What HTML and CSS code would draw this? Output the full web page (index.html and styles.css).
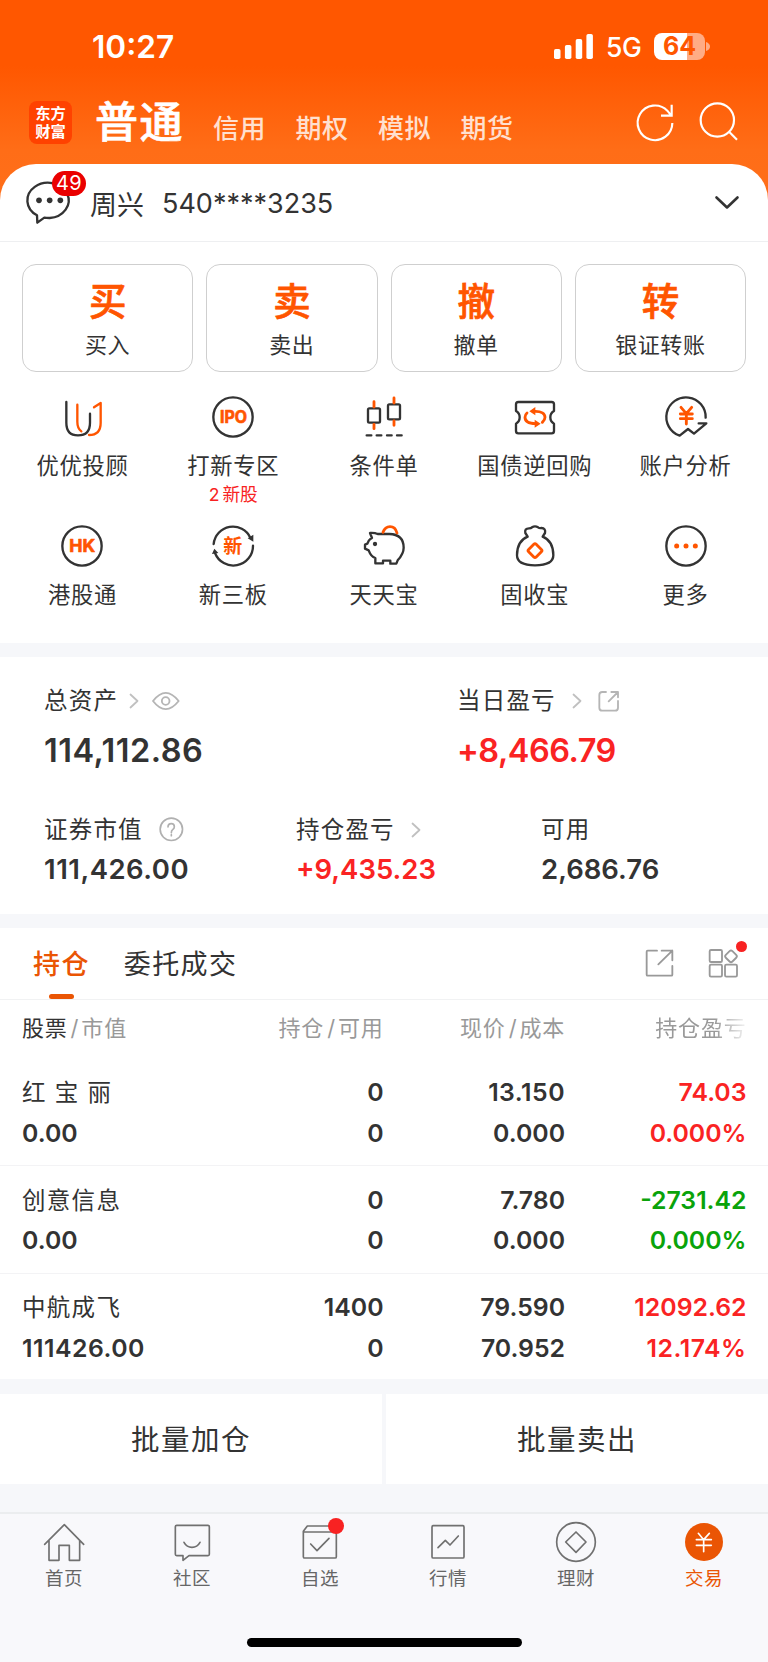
FILE: index.html
```html
<!DOCTYPE html>
<html lang="zh-CN">
<head>
<meta charset="utf-8">
<title>交易</title>
<link rel="stylesheet" href="styles.css">
</head>
<body>
<header class="top">
  <div class="status">
    <span class="time">10:27</span>
    <div class="status-right">
      <svg class="signal" viewBox="0 0 39 25"><rect x="0" y="15" width="6.5" height="10" rx="1.8"/><rect x="10.9" y="11" width="6.5" height="14" rx="1.8"/><rect x="21.7" y="5" width="6.5" height="20" rx="1.8"/><rect x="32.4" y="0" width="6.5" height="25" rx="1.8"/></svg>
      <span class="net">5G</span>
      <div class="battery"><span class="battery-text">64</span></div>
      <svg class="battery-cap" viewBox="0 0 4 9"><path d="M0 0Q4 1.5 4 4.5T0 9z"/></svg>
    </div>
  </div>
  <nav class="modes">
    <div class="logo"><span>东方</span><span>财富</span></div>
    <span class="mode-on">普通</span>
    <span class="mode">信用</span><span class="mode">期权</span><span class="mode">模拟</span><span class="mode">期货</span>
    <svg class="top-icon refresh" viewBox="753 303 126 126"><path d="M865 369A52 52 0 1 1 850 332L862 347M863 314V347H831"/></svg>
    <svg class="top-icon" viewBox="940 303 126 126"><circle cx="998" cy="360" r="50"/><path d="M1034 396L1057 419"/></svg>
  </nav>
</header>

<main class="sheet">
  <section class="account">
    <div class="chat">
      <svg viewBox="78 540 135 135"><path d="M108 646A62 53 0 1 1 146 654Q135 654 130 653L109 668Z"/><g class="fill-dark"><circle cx="114" cy="601" r="8.5"/><circle cx="146" cy="601" r="8.5"/><circle cx="178" cy="601" r="8.5"/></g></svg>
      <span class="badge">49</span>
    </div>
    <span class="name">周兴</span>
    <span class="acct">540****3235</span>
    <svg class="down" viewBox="0 0 24 14"><path d="M1.5 1.5L12 11.5L22.5 1.5"/></svg>
  </section>

  <section class="cards">
    <div class="card"><b>买</b><span>买入</span></div>
    <div class="card"><b>卖</b><span>卖出</span></div>
    <div class="card"><b>撤</b><span>撤单</span></div>
    <div class="card"><b>转</b><span>银证转账</span></div>
  </section>

  <section class="tools">
    <div class="tool"><svg viewBox="181 432 132 132"><path d="M200 453V515Q200 553 235 553Q271 553 271 515V488"/><path class="o" d="M233 461V512Q233 532 245 541M283 469L303 456V515Q303 552 268 552"/></svg><span>优优投顾</span></div>
    <div class="tool"><svg viewBox="634 432 132 132"><circle cx="700" cy="498" r="59"/><text x="661" y="517" font-size="50" textLength="81" lengthAdjust="spacingAndGlyphs">IPO</text></svg><span>打新专区</span><em>2 新股</em></div>
    <div class="tool"><svg viewBox="1086 432 132 132"><rect x="1104" y="472" width="36" height="43" rx="4"/><rect x="1164" y="460" width="36" height="45" rx="4"/><path d="M1100 553h14M1130 553h14M1161 553h14M1191 553h14"/><path class="o wick" d="M1122 452V468M1122 520V533M1182 441V456M1182 510V523"/></svg><span>条件单</span></div>
    <div class="tool"><svg viewBox="386 432 132 132"><path d="M402 453H502Q509 453 509 460V480Q498 486 498 499Q498 512 509 518V540Q509 547 502 547H402Q395 547 395 540V518Q406 512 406 499Q406 486 395 480V460Q395 453 402 453Z"/><path class="o arr" d="M450 481C472 480 482 488 482 499Q482 507 474 514M454 518C432 518 422 510 422 499Q422 491 428 486"/><path class="of" d="M435 481L453 468V493ZM469 518L451 506V530Z"/></svg><span>国债逆回购</span></div>
    <div class="tool"><svg viewBox="838 432 132 132"><path d="M963 500A59 59 0 1 0 885 554L910 534L928 548L965 517H942"/><path class="o arr" d="M889 469L905 488L921 469M905 488V519M887 489H923M887 503H923"/></svg><span>账户分析</span></div>
    <div class="tool"><svg viewBox="182 71 132 132"><circle cx="248" cy="137" r="59"/><text x="210" y="156" font-size="53" textLength="78" lengthAdjust="spacingAndGlyphs">HK</text></svg><span>港股通</span></div>
    <div class="tool"><svg viewBox="634 71 132 132"><path d="M642 131A58 58 0 0 1 752 112M760 136A59 59 0 0 1 646 158"/><path class="df" d="M744 114L761 103V124ZM644 145L637 161L656 158Z"/><text class="cjk" x="671" y="158" font-size="57">新</text></svg><span>新三板</span></div>
    <div class="tool"><svg viewBox="1086 71 132 132"><path d="M1107 120Q1110 116 1116 113L1110 98Q1124 97 1133 101H1168C1200 102 1211 120 1211 142Q1211 160 1193 180L1189 190H1171V181H1149V189H1126V173Q1113 169 1106 150L1095 145V133L1102 130Z"/><circle class="df" cx="1125" cy="131" r="6.5"/><path class="o arr" d="M1149 96Q1155 79 1170 79Q1186 79 1191 98"/></svg><span>天天宝</span></div>
    <div class="tool"><svg viewBox="386 71 132 132"><path d="M430 109Q398 122 398 165Q398 195 452 195Q507 195 507 165Q507 122 475 109M430 109L423 98Q420 84 434 84Q440 84 443 81Q452 75 461 81Q465 84 471 83Q485 84 482 98L475 109"/><rect class="o arr" x="436" y="135" width="32" height="32" rx="5" transform="rotate(45 452 151)"/></svg><span>固收宝</span></div>
    <div class="tool"><svg viewBox="838 71 132 132"><circle cx="904" cy="137" r="59"/><g class="of"><circle cx="876" cy="137" r="7.5"/><circle cx="904" cy="137" r="7.5"/><circle cx="932" cy="137" r="7.5"/></g></svg><span>更多</span></div>
  </section>

  <section class="assets">
    <div class="asset-row main-row">
      <div class="asset">
        <div class="label">总资产<svg class="chev" viewBox="0 0 10 16"><path d="M1.5 1.5L8.5 8L1.5 14.5"/></svg><svg class="eye" viewBox="454 60 84 60"><path d="M457 90Q495 41 534 90Q495 139 457 90Z"/><circle cx="495" cy="90" r="11.5"/></svg></div>
        <div class="value ones">114,112.86</div>
      </div>
      <div class="asset">
        <div class="label">当日盈亏<svg class="chev far" viewBox="0 0 10 16"><path d="M1.5 1.5L8.5 8L1.5 14.5"/></svg><svg class="share" viewBox="640 60 66 66"><path d="M664 66H653Q644 66 644 75V113Q644 122 653 122H691Q700 122 700 113V93M680 66H700V82M700 66L672 94"/></svg></div>
        <div class="value tight up">+8,466.79</div>
      </div>
    </div>
    <div class="asset-row sub-row">
      <div class="asset">
        <div class="label">证券市值<svg class="help" viewBox="475 440 74 74"><circle cx="512" cy="477" r="33.5"/><path d="M502 470Q502 460 512 460Q521 460 521 469Q521 474 516 478Q512 481 512 487M512 493V496"/></svg></div>
        <div class="value ones">111,426.00</div>
      </div>
      <div class="asset">
        <div class="label">持仓盈亏<svg class="chev far" viewBox="0 0 10 16"><path d="M1.5 1.5L8.5 8L1.5 14.5"/></svg></div>
        <div class="value up">+9,435.23</div>
      </div>
      <div class="asset">
        <div class="label">可用</div>
        <div class="value">2,686.76</div>
      </div>
    </div>
  </section>

  <section class="holdings">
    <div class="tabs">
      <span class="tab tab-on">持仓</span>
      <span class="tab">委托成交</span>
      <svg class="tab-icon" viewBox="780 86 90 90"><path d="M816 94H788Q785 94 785 97V166Q785 169 788 169H859Q862 169 862 166V140M830 94H862V123M862 94L820 135"/></svg>
      <div class="grid-wrap"><svg class="tab-icon" viewBox="971 87 90 90"><rect x="976" y="93" width="37" height="36" rx="4"/><rect x="976" y="137" width="37" height="36" rx="4"/><rect x="1022" y="137" width="36" height="36" rx="4"/><rect x="1026" y="98" width="28" height="28" rx="6" transform="rotate(45 1040 112)"/></svg><i class="dot"></i></div>
    </div>
    <div class="row head">
      <span><strong>股票</strong><i>/</i>市值</span><span>持仓<i>/</i>可用</span><span>现价<i>/</i>成本</span><span class="fade">持仓盈亏</span>
    </div>
    <div class="row stock">
      <span class="stock-name">红 宝 丽</span><span>0</span><span class="w1">13.150</span><span class="up">74.03</span>
      <span>0.00</span><span>0</span><span>0.000</span><span class="up">0.000%</span>
    </div>
    <div class="row stock">
      <span class="stock-name">创意信息</span><span>0</span><span>7.780</span><span class="down-c">-2731.42</span>
      <span>0.00</span><span>0</span><span>0.000</span><span class="down-c">0.000%</span>
    </div>
    <div class="row stock">
      <span class="stock-name">中航成飞</span><span>1400</span><span>79.590</span><span class="up">12092.62</span>
      <span class="w1">111426.00</span><span>0</span><span>70.952</span><span class="up w1">12.174%</span>
    </div>
  </section>

  <section class="batch"><div>批量加仓</div><div>批量卖出</div></section>
</main>

<footer class="bottom">
  <nav class="nav">
    <div class="nav-item"><svg viewBox="129 451 126 126"><path d="M134 521L193 462L251 521M147 510V569H177V524H208V569H239V510"/></svg>首页</div>
    <div class="nav-item"><svg viewBox="513 451 126 126"><path d="M526 468Q526 464 530 464H624Q628 464 628 468V551Q628 555 624 555H567L549 569V555H530Q526 555 526 551ZM552 515Q560 530 576 530Q592 530 600 515"/></svg>社区</div>
    <div class="nav-item"><svg viewBox="897 451 126 126"><path d="M910 484H1009V558Q1009 562 1005 562H914Q910 562 910 558V482L922 466H1009V484M932 520L951 540L987 503"/></svg>自选<i class="dot big"></i></div>
    <div class="nav-item"><svg viewBox="129 451 126 126"><rect x="144" y="465" width="96" height="97" rx="4"/><path d="M162 531L184 509L198 523L223 496"/></svg>行情</div>
    <div class="nav-item"><svg viewBox="513 451 126 126"><circle cx="576" cy="514" r="58"/><path d="M576 484L606 514L576 545L545 514Z"/></svg>理财</div>
    <div class="nav-item nav-on"><svg viewBox="896 451 126 126"><circle class="disc" cx="959" cy="514" r="57"/><path class="yen" d="M942 488L958 507L975 488M958 507V543M936 507H981M936 524H981"/></svg>交易</div>
  </nav>
  <div class="home-bar"></div>
</footer>
</body>
</html>
```

FILE: styles.css
```css
* { box-sizing: border-box; }
body {
  margin: 0; width: 768px; height: 1662px; overflow: hidden;
  font-family: Inter, "Noto Sans CJK SC", sans-serif;
  color: #333; background: #f6f7fa;
  display: flex; flex-direction: column;
}
svg { display: block; flex: none; fill: none; stroke: #333; stroke-linecap: round; stroke-linejoin: round; overflow: visible; }

/* Header */
.top { height: 204px; flex: none; color: #fff; background: linear-gradient(#ff5700 0, #ff5700 66px, #ff6d17 150px, #ff6f1a 204px); }
.status { height: 93px; display: flex; justify-content: space-between; align-items: center; padding: 0 58px 0 92px; }
.time { font-size: 31.6px; font-weight: 600; }
.status-right { display: flex; align-items: center; }
.signal { width: 39px; height: 25px; fill: #fff; stroke: none; margin-right: 13px; }
.net { font-size: 26.5px; font-weight: 450; width: 36px; margin-right: 12px; letter-spacing: -.5px; }
.battery { width: 51px; height: 27px; border-radius: 8px; background: linear-gradient(90deg, #fff 33px, #ffac85 33px); display: flex; align-items: center; justify-content: center; margin-right: 1px; }
.battery-text { font-size: 25px; line-height: 27px; font-weight: 700; color: #ff5700; }
.battery-cap { width: 4px; height: 9px; fill: #ffac85; stroke: none; }
.modes { display: flex; align-items: center; height: 57px; padding-left: 29px; }
.modes > * { flex: none; }
.logo { width: 43px; height: 43px; margin-top: 2px; border-radius: 8px; background: #ff4200; font-weight: 700; font-size: 15.3px; display: grid; grid-auto-rows: 18px; line-height: 18px; justify-items: center; align-content: center; }
.mode-on { font-size: 43px; font-weight: 500; -webkit-text-stroke: .7px #fff; letter-spacing: 1.4px; line-height: 60px; margin: 0 29px 0 23px; width: 89px; }
.mode { font-size: 26px; line-height: 40px; font-weight: 500; width: 82.5px; color: #ffe0d0; padding-top: 14px; letter-spacing: .6px; }
.top-icon { width: 42px; height: 42px; stroke: #fff; stroke-width: 6.5; stroke-linecap: butt; stroke-linejoin: miter; margin-left: 21px; }
.refresh { margin-left: 92px; }

/* Account */
.sheet { margin-top: -40.5px; border-radius: 36px 36px 0 0; background: #fff; flex: none; }
.account { height: 78.5px; display: flex; align-items: center; padding: 2px 29px 0 26px; border-bottom: 1.5px solid #eeeff1; }
.chat { position: relative; width: 64px; }
.chat svg { width: 45px; height: 45px; stroke-width: 7; margin: 0 0 1px 1px; }
.chat .fill-dark { fill: #333; stroke: none; }
.badge { position: absolute; left: 26px; top: -9px; width: 34px; height: 25px; border-radius: 13px; background: #ea0000; color: #fff; font-size: 20px; line-height: 25px; text-align: center; letter-spacing: .3px; }
.name { font-size: 27px; width: 72px; }
.acct { font-size: 27px; }
.down { width: 24px; height: 14px; margin-left: auto; stroke-width: 2.6; }

/* Trade cards */
.cards { display: grid; grid-template-columns: repeat(4, 1fr); gap: 13px; padding: 22px 22px 0; }
.card { height: 107.5px; border: 1.3px solid #cfcfcf; border-radius: 14px; display: flex; flex-direction: column; align-items: center; }
.card b { font-size: 37.5px; line-height: 44px; margin-top: 14.5px; font-weight: 500; -webkit-text-stroke: .7px #ff5500; color: #ff5500; }
.card span { font-size: 22px; line-height: 30px; margin-top: 6.5px; letter-spacing: .6px; }

/* Shortcuts */
.tools { display: grid; grid-template-columns: repeat(5, 1fr); grid-auto-rows: 129.3px; padding: 23px 7px 0; height: 271.5px; }
.tool { display: flex; flex-direction: column; align-items: center; }
.tool svg { width: 44px; height: 44px; stroke-width: 7; }
.tool .o { stroke: #ff5500; }
.tool .arr, .tool .wick { stroke-width: 8.5; }
.tool .of { fill: #ff5500; stroke: none; }
.tool .df { fill: #333; stroke: none; }
.tool text { fill: #ff5500; stroke: #ff5500; stroke-width: 2; font-weight: 700; font-family: Inter, sans-serif; }
.tool text.cjk { font-family: "Noto Sans CJK SC", sans-serif; stroke: none; }
.tool span { font-size: 22.3px; line-height: 30px; margin-top: 12px; letter-spacing: .7px; white-space: nowrap; }
.tool em { font-style: normal; font-size: 17.7px; line-height: 24px; color: #f82222; margin-top: 2.5px; word-spacing: -2px; }

/* Assets */
.assets { border-top: 14px solid #f6f7fa; height: 270.5px; }
.asset-row { display: grid; }
.main-row { grid-template-columns: 413px 1fr; padding: 27.5px 0 0 44px; }
.sub-row { grid-template-columns: 252px 245px 1fr; padding: 42.5px 0 0 44px; }
.label { display: flex; align-items: center; font-size: 23.5px; line-height: 32px; letter-spacing: 1.2px; }
.value { font-weight: 600; }
.main-row .value { font-size: 32.5px; line-height: 40px; margin-top: 14.5px; }
.sub-row .value { font-size: 27.5px; line-height: 36px; margin-top: 5.5px; }
.value.ones { letter-spacing: .5px; }
.value.tight { letter-spacing: -.5px; }
.up { color: #fa2323; }
.down-c { color: #0aa30a; }
.chev { width: 10px; height: 16px; margin-left: 10.5px; stroke: #c0c0c0; stroke-width: 1.8; }
.chev.far { margin-left: 16px; }
.eye { width: 28px; height: 20px; margin-left: 13.5px; stroke: #b5b5b5; stroke-width: 5.5; }
.share { width: 22px; height: 22px; margin-left: 16.5px; stroke: #b5b5b5; stroke-width: 5.5; }
.help { width: 24.7px; height: 24.7px; margin-left: 16px; stroke: #b0b0b0; stroke-width: 5; }

/* Holdings */
.holdings { border-top: 14.5px solid #f6f7fa; height: 465.5px; }
.tabs { height: 72px; display: flex; align-items: center; padding: 0 30px 0 33px; border-bottom: 1.3px solid #f1f2f3; }
.tab { font-size: 27px; line-height: 73px; height: 71px; letter-spacing: 1.4px; margin-right: 34px; }
.tab-on { position: relative; color: #ea5504; font-weight: 500; }
.tab-on::after { content: ""; position: absolute; left: 16px; bottom: 0; width: 25px; height: 5px; border-radius: 2.5px; background: #ea5504; }
.tab-icon { width: 30px; height: 30px; stroke: #999; stroke-width: 5.5; }
.tab + .tab-icon { margin-left: auto; margin-right: 33.5px; }
.grid-wrap { position: relative; }
.dot { position: absolute; width: 11px; height: 11px; border-radius: 50%; background: #f82222; left: 28px; top: -7px; }
.row { display: grid; grid-template-columns: 180px 181.5px 181.5px 181.5px; padding-left: 22px; text-align: right; }
.row > :nth-child(4n+1) { text-align: left; }
.head { height: 59px; line-height: 57px; font-size: 22px; color: #999; letter-spacing: .8px; }
.head strong { font-weight: 400; color: #333; }
.head i { font-style: normal; margin: 0 2px 0 3px; }
.fade { -webkit-mask-image: linear-gradient(90deg, #000 150px, rgba(0,0,0,.12) 181px); }
.stock { height: 107.7px; padding-top: 13.5px; grid-auto-rows: 40.7px; line-height: 40.7px; font-size: 24.8px; font-weight: 600; border-bottom: 1.3px solid #f3f3f5; }
.stock:last-child { border-bottom: 0; }
.stock .stock-name { font-size: 23.5px; font-weight: 400; letter-spacing: 1.3px; line-height: 42px; }
.w1 { letter-spacing: .5px; }

.batch { display: grid; grid-template-columns: 1fr 1fr; gap: 4px; padding-top: 15px; background: #f6f7fa; }
.batch div { height: 90px; line-height: 92px; background: #fff; text-align: center; font-size: 28.5px; letter-spacing: 1.5px; }

/* Bottom navigation */
.bottom { margin-top: auto; height: 150px; border-top: 2px solid #ebedef; background: #f8f8fb; flex: none; display: flex; flex-direction: column; align-items: center; }
.nav { width: 768px; display: grid; grid-template-columns: repeat(6, 128px); }
.nav-item { position: relative; display: flex; flex-direction: column; align-items: center; padding-top: 6.5px; font-size: 18.5px; line-height: 28px; letter-spacing: .6px; color: #666; gap: 1.5px; }
.nav-item svg { width: 42px; height: 42px; stroke: #707070; stroke-width: 5; }
.nav-on { color: #ea5504; }
.nav-item .disc { fill: #ea5504; stroke: none; }
.nav-item .yen { stroke: #fff; }
.big { width: 16px; height: 16px; left: 71.5px; top: 4px; }
.home-bar { width: 275px; height: 9px; border-radius: 5px; background: #000; margin-top: 46px; }
```
